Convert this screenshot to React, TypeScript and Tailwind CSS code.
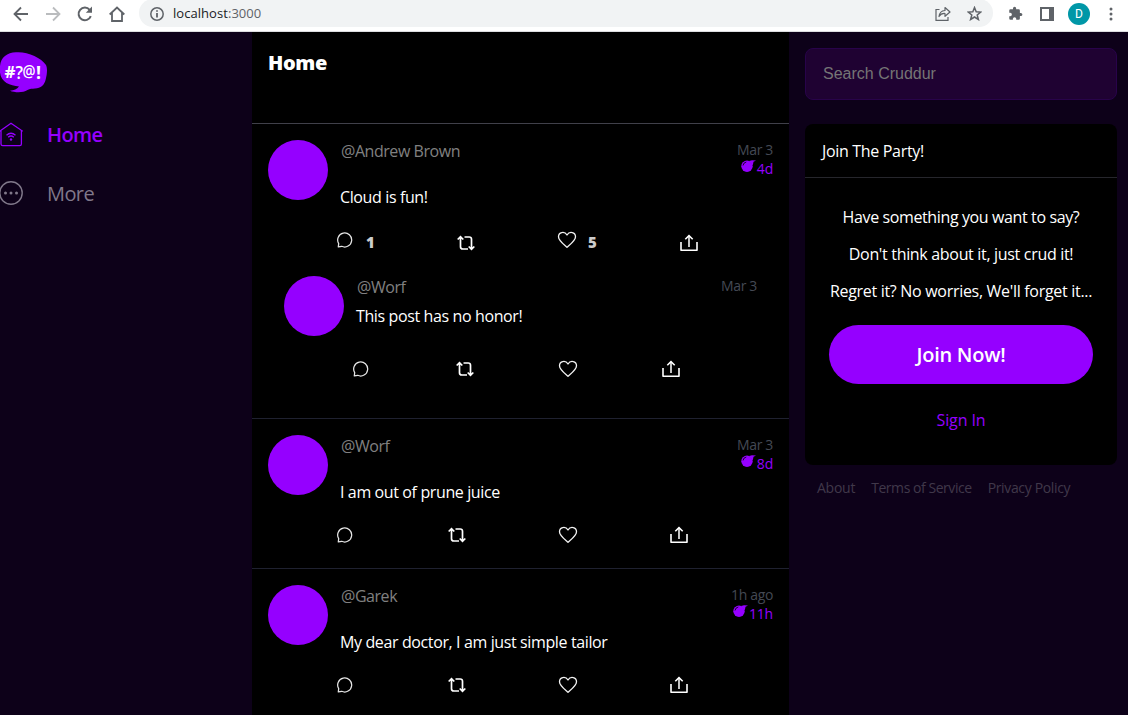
import type { ReactNode } from "react";

function CommentIcon() {
  return (
    <svg width="16" height="16" viewBox="0 0 16 16" fill="none" stroke="#e6e6e6" strokeWidth="1.25">
      <path d="M1.300 14.800 1.700 11.600A7 7 0 1 1 4.700 14.300Z" strokeLinejoin="round" />
    </svg>
  );
}

function RepostIcon() {
  return (
    <svg width="18" height="16" viewBox="0 0 18 16" fill="none" stroke="#fff" strokeWidth="1.7">
      <path d="M.7 4.500 3.500 1.600 6.300 4.500M3.500 2v9.700q0 2.300 2.300 2.300H11" />
      <path d="M17.300 11.500 14.500 14.400 11.700 11.500M14.500 14V4.300Q14.500 2 12.200 2H7.500" />
    </svg>
  );
}

function HeartIcon() {
  return (
    <svg width="20" height="18" viewBox="0 0 20 18" fill="none" stroke="#f2f2f2" strokeWidth="1.3">
      <path d="M10 16.300C8 14.300 1.500 9.800 1.500 5.700 1.500 1.200 7.500-.2 10 4 12.500-.2 18.500 1.200 18.500 5.700 18.500 9.800 12 14.300 10 16.300Z" strokeLinejoin="round" />
    </svg>
  );
}

function ShareIcon() {
  return (
    <svg width="18" height="18" viewBox="0 0 18 18" fill="none" stroke="#fff" strokeWidth="1.6">
      <path d="M1 8v8.200h16V8" strokeLinejoin="round" />
      <path d="M9 13V1.800" stroke="#ccc" strokeWidth="1.900" />
      <path d="M5.300 5.200 9 1.600l3.700 3.600" />
    </svg>
  );
}

function BombIcon() {
  return (
    <svg className="mt-px" width="15" height="13" viewBox="0 0 15 13">
      <circle cx="6" cy="6.300" r="5.700" fill="#9500ff" />
      <path d="M8 .9 11 .3l4 .2-2.500 1.300-.7 3.500Z" fill="#9500ff" />
      <path d="M2 5.500Q2.500 2.500 5.300 2" fill="none" stroke="#000" strokeWidth=".8" />
    </svg>
  );
}

function Logo() {
  return (
    <svg width="48" height="41" viewBox="0 0 48 41">
      <path
        d="M16 .3C27-.7 41 5.500 46 13c1.500 3 1.200 9-.2 14-1.300 6-5 9.500-10.800 9.500-3 .2-5 .2-7.500 1.500C23 41 15 40.700 10 38.700c4-.5 7-1.500 9-4.200C10 33.500 1 30.500 0 20.500V14C1 5 7 .8 16 .3Z"
        fill="#9500ff"
      />
      <g fill="#fff" className="font-['Open_Sans',sans-serif] text-[16px] font-bold">
        <text x="4.500" y="25.500" textLength="11" lengthAdjust="spacingAndGlyphs">#</text>
        <text x="15.500" y="26.500" textLength="7.500" lengthAdjust="spacingAndGlyphs" className="text-[18px] font-semibold">?</text>
        <text x="22.500" y="25" textLength="13" lengthAdjust="spacingAndGlyphs" className="text-[16px] font-semibold">@</text>
        <text x="36" y="26.500" textLength="5" lengthAdjust="spacingAndGlyphs" className="text-[18px]">!</text>
      </g>
    </svg>
  );
}

function HomeIcon() {
  return (
    <svg width="23" height="25" viewBox="0 0 23 25" fill="none" stroke="#9500ff" strokeWidth="1.300">
      <path d="M-.5 9.300 11 1.200l11.800 8.100M1 8.500V22q0 1.700 1.700 1.700h17q1.700 0 1.700-1.700V8.500" />
      <path d="M6.500 13.200q4.500-4 9 0M8.200 15.300q2.800-2.500 5.600 0" />
      <circle cx="11" cy="17.500" r="1.200" fill="#9500ff" stroke="none" />
    </svg>
  );
}

function MoreIcon() {
  return (
    <svg width="23" height="24" viewBox="0 0 23 24">
      <circle cx="11" cy="12" r="11.200" fill="none" stroke="#80788a" strokeWidth="1.400" />
      <g fill="#80788a">
        <circle cx="5.500" cy="12" r="1.500" />
        <circle cx="11" cy="12" r="1.500" />
        <circle cx="16.500" cy="12" r="1.500" />
      </g>
    </svg>
  );
}

function BrowserBar() {
  return (
    <div className="flex h-8 shrink-0 items-start overflow-hidden border-b border-[#dcdde0] bg-white text-[#5f6368]">
      <div className="flex h-[27px] w-[139px] items-center gap-4 pl-[13px]">
        <svg width="16" height="16" viewBox="0 0 16 16" fill="none" stroke="#5f6368" strokeWidth="1.800">
          <path d="M15 8H2M8 1.500 1.500 8 8 14.500" />
        </svg>
        <svg width="16" height="16" viewBox="0 0 16 16" fill="none" stroke="#babcbe" strokeWidth="1.800">
          <path d="M1 8h13M8 1.500 14.500 8 8 14.500" />
        </svg>
        <svg width="16" height="16" viewBox="0 0 16 16" fill="none" stroke="#5f6368" strokeWidth="2">
          <path d="M13.800 10.200A6.300 6.300 0 1 1 12.700 3.800" />
          <path d="M15 .5v6.200H8.800Z" fill="#5f6368" stroke="none" />
        </svg>
        <svg width="16" height="16" viewBox="0 0 16 16" fill="none" stroke="#5f6368" strokeWidth="1.800">
          <path d="M.7 8.500 8 1.500l7.300 7M3 7v8h10V7" />
        </svg>
      </div>
      <div className="-mt-px flex h-7 w-[854px] items-center rounded-full bg-[#f1f3f4] pt-px pr-[11px] pl-[11px]">
        <svg width="14" height="14" viewBox="0 0 14 14" fill="none" stroke="#5f6368" strokeWidth="1.500">
          <circle cx="7" cy="7" r="6.200" />
          <path d="M7 6v4.500M7 3.200v1.600" strokeWidth="1.800" />
        </svg>
        <span className="ml-[9px] flex-1 font-['Open_Sans',sans-serif] text-[13px] tracking-[0.05px]">
          <span className="text-[#202124]">localhost</span>:3000
        </span>
        <svg width="16" height="15" viewBox="0 0 16 15" fill="none" stroke="#5f6368" strokeWidth="1.200">
          <path d="M4.500 3.500H1v10.800h12V11" />
          <path d="M4 10.500Q4.500 5 10 4.500V1.500L15 6l-5 4.300V7.500Q6 7.200 4 10.500Z" strokeLinejoin="round" />
        </svg>
        <svg className="ml-4" width="15" height="15" viewBox="0 0 15 15" fill="none" stroke="#5f6368" strokeWidth="1.500">
          <path d="m7.500 1.600 1.700 4.200 4.500.3-3.500 2.900 1.200 4.500-3.900-2.500-3.900 2.500L4.800 9 1.300 6.100l4.500-.3Z" />
        </svg>
      </div>
      <div className="flex h-[27px] flex-1 items-center pl-[15px]">
        <svg width="15" height="15" viewBox="0 0 24 24" fill="#5f6368">
          <path d="M20.500 11H19V7a2 2 0 0 0-2-2h-4V3.500a2.500 2.500 0 0 0-5 0V5H4a2 2 0 0 0-2 2v3.800h1.500a2.700 2.700 0 0 1 0 5.400H2V20a2 2 0 0 0 2 2h3.800v-1.500a2.700 2.700 0 0 1 5.400 0V22H17a2 2 0 0 0 2-2v-4h1.500a2.500 2.500 0 0 0 0-5Z" />
        </svg>
        <svg className="ml-[17px]" width="14" height="14" viewBox="0 0 14 14" fill="#5f6368">
          <path fillRule="evenodd" d="M0 0h14v14H0ZM2 2v10h7V2Z" />
        </svg>
        <div className="ml-[14px] flex size-[22px] items-center justify-center rounded-full bg-[#0097a7] font-[Roboto,sans-serif] text-[12px] text-white">
          D
        </div>
        <svg className="ml-[19px]" width="4" height="14" viewBox="0 0 4 14" fill="#5f6368">
          <circle cx="2" cy="2" r="1.500" />
          <circle cx="2" cy="7" r="1.500" />
          <circle cx="2" cy="12" r="1.500" />
        </svg>
      </div>
    </div>
  );
}

function Sidebar() {
  return (
    <nav className="w-[252px] shrink-0 pt-5">
      <Logo />
      <a className="mt-[29px] flex h-6 items-center text-[20px] font-semibold text-[#9500ff]">
        <span className="w-[47px]">
          <HomeIcon />
        </span>
        <span className="pt-[2px] tracking-[-0.6px]">Home</span>
      </a>
      <a className="mt-[35px] flex h-6 items-center text-[20px] text-[#80788a]">
        <span className="w-[47px]">
          <MoreIcon />
        </span>
        <span className="pt-[2px] tracking-[-0.6px]">More</span>
      </a>
    </nav>
  );
}

interface ActivityProps {
  handle: string;
  time: string;
  expires?: string;
  message: ReactNode;
  reply?: boolean;
}

function ActivityContent({ handle, time, expires, message, reply }: ActivityProps) {
  return (
    <div className="flex">
      <div className="size-[60px] shrink-0 rounded-full bg-[#9500ff]" />
      <div className="flex-1 pl-3">
        <div className="flex justify-between">
          <span className="h-[22px] pl-px leading-[22px] tracking-[-0.45px] text-[#808080]">{handle}</span>
          <div className="text-right text-[14px] leading-[19px] tracking-[-0.35px] text-[#444954]">
            <div className="h-[19px]">{time}</div>
            {expires && (
              <div className="flex h-[19px] justify-end gap-px text-[#9500ff]">
                <BombIcon />
                <span className="tracking-[-0.2px]">{expires}</span>
              </div>
            )}
          </div>
        </div>
        <p className={reply ? "mt-[7px] leading-[22px] tracking-[-0.38px]" : "mt-2 leading-[22px] tracking-[-0.38px]"}>
          {message}
        </p>
      </div>
    </div>
  );
}

function Actions() {
  return (
    <div className="flex h-[18px] items-center pl-[69px]">
      <span className="w-[111px]"><CommentIcon /></span>
      <span className="w-[110px]"><RepostIcon /></span>
      <span className="w-[112px]"><HeartIcon /></span>
      <ShareIcon />
    </div>
  );
}

function Feed() {
  return (
    <main className="w-[537px] shrink-0 overflow-hidden bg-black">
      <header className="h-[92px] border-b border-[#40404a] px-4 pt-[17px]">
        <h1 className="text-[20px] leading-7 font-extrabold tracking-[-0.35px]">Home</h1>
      </header>

      <article className="h-[295px] border-b border-[#1f2130] p-4">
        <ActivityContent handle="@Andrew Brown" time="Mar 3" expires="4d" message="Cloud is fun!" />
        <div className="mt-[22px] flex h-[22px] items-start pl-[69px] text-[15px] font-extrabold text-[#ccc]">
          <div className="flex w-[120px] pt-[2px]">
            <CommentIcon />
            <span className="ml-[13px] leading-5">1</span>
          </div>
          <div className="w-[100px] pt-[5px]"><RepostIcon /></div>
          <div className="flex w-[123px] pt-px">
            <HeartIcon />
            <span className="ml-[11px] leading-[22px]">5</span>
          </div>
          <div className="pt-1"><ShareIcon /></div>
        </div>
        <div className="mt-6 px-4">
          <ActivityContent handle="@Worf" time="Mar 3" message="This post has no honor!" reply />
          <div className="mt-6 flex h-[18px] items-center pl-[69px]">
            <span className="w-[103px]"><CommentIcon /></span>
            <span className="w-[102px]"><RepostIcon /></span>
            <span className="w-[104px]"><HeartIcon /></span>
            <ShareIcon />
          </div>
        </div>
      </article>

      <article className="h-[150px] border-b border-[#1f2130] p-4">
        <ActivityContent handle="@Worf" time="Mar 3" expires="8d" message="I am out of prune juice" />
        <div className="mt-[23px]"><Actions /></div>
      </article>

      <article className="h-[150px] p-4">
        <ActivityContent handle="@Garek" time="1h ago" expires="11h" message="My dear doctor, I am just simple tailor" />
        <div className="mt-[23px]"><Actions /></div>
      </article>
    </main>
  );
}

function JoinPanel() {
  return (
    <aside className="min-w-0 flex-1 pt-4 pr-[11px] pl-4">
      <input
        className="block h-[52px] w-full rounded-lg border border-[#28034a] bg-[#1f0232] px-[17px] font-['Liberation_Sans',sans-serif] text-[16px] outline-none placeholder:text-[#757575]"
        placeholder="Search Cruddur"
      />
      <section className="mt-6 h-[341px] rounded-lg bg-black">
        <h2 className="h-[54px] border-b border-[#26262c] pt-4 pl-[17px] leading-[22px] tracking-[-0.32px]">
          Join The Party!
        </h2>
        <div className="flex flex-col px-6 pt-7 text-center leading-[22px] whitespace-nowrap">
          <p className="tracking-[-0.38px]">Have something you want to say?</p>
          <p className="mt-[15px] tracking-[-0.32px]">Don't think about it, just crud it!</p>
          <p className="mt-[15px] tracking-[-0.3px]">Regret it? No worries, We'll forget it...</p>
          <button className="mt-[23px] h-[59px] rounded-full bg-[#9500ff] pt-px text-[20px] font-semibold tracking-[-0.25px]">
            Join Now!
          </button>
          <a className="mt-[25px] tracking-[-0.1px] text-[#9500ff]">Sign In</a>
        </div>
      </section>
      <footer className="flex gap-4 pt-3 pl-3 text-[14px] leading-[21px] whitespace-nowrap text-[#40384a]">
        <a className="tracking-[-0.25px]">About</a>
        <a className="tracking-[-0.45px]">Terms of Service</a>
        <a className="tracking-[-0.35px]">Privacy Policy</a>
      </footer>
    </aside>
  );
}

export default function App() {
  return (
    <div className="flex h-screen flex-col overflow-hidden bg-[#0d0119] font-['Open_Sans','Noto_Sans',sans-serif] text-[16px] text-white">
      <BrowserBar />
      <div className="flex min-h-0 flex-1">
        <Sidebar />
        <Feed />
        <JoinPanel />
      </div>
    </div>
  );
}
